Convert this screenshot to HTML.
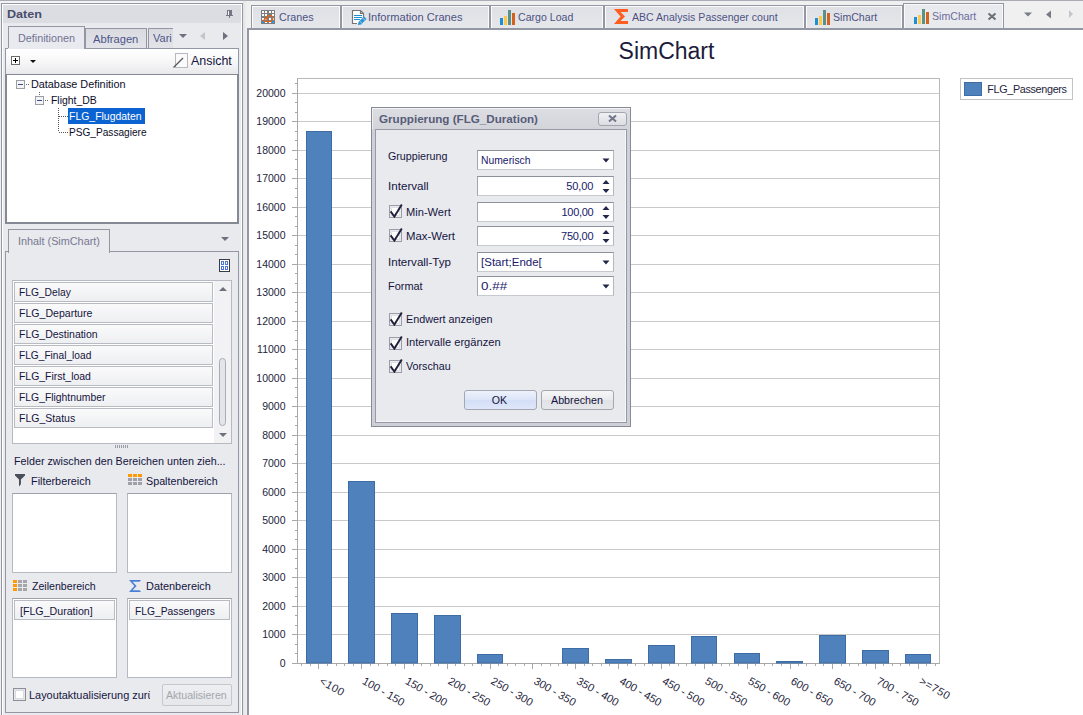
<!DOCTYPE html>
<html><head><meta charset="utf-8">
<style>
*{box-sizing:border-box}
html,body{margin:0;padding:0}
body{width:1083px;height:715px;overflow:hidden;position:relative;background:#eeeff2;font-family:"Liberation Sans", sans-serif;font-size:11px;color:#1e1e3c}
.a{position:absolute}
</style></head><body>
<svg style="position:absolute;left:0;top:0" width="1083" height="715"><rect x="248" y="29" width="835" height="686" fill="#ffffff"/><text x="666.5" y="58.7" font-family="Liberation Sans" font-size="23" fill="#1b1b3b" text-anchor="middle">SimChart</text><line x1="297.5" y1="634.5" x2="939.5" y2="634.5" stroke="#c9c9c9" stroke-width="1"/><line x1="297.5" y1="606.5" x2="939.5" y2="606.5" stroke="#c9c9c9" stroke-width="1"/><line x1="297.5" y1="577.5" x2="939.5" y2="577.5" stroke="#c9c9c9" stroke-width="1"/><line x1="297.5" y1="549.5" x2="939.5" y2="549.5" stroke="#c9c9c9" stroke-width="1"/><line x1="297.5" y1="520.5" x2="939.5" y2="520.5" stroke="#c9c9c9" stroke-width="1"/><line x1="297.5" y1="492.5" x2="939.5" y2="492.5" stroke="#c9c9c9" stroke-width="1"/><line x1="297.5" y1="463.5" x2="939.5" y2="463.5" stroke="#c9c9c9" stroke-width="1"/><line x1="297.5" y1="435.5" x2="939.5" y2="435.5" stroke="#c9c9c9" stroke-width="1"/><line x1="297.5" y1="406.5" x2="939.5" y2="406.5" stroke="#c9c9c9" stroke-width="1"/><line x1="297.5" y1="378.5" x2="939.5" y2="378.5" stroke="#c9c9c9" stroke-width="1"/><line x1="297.5" y1="349.5" x2="939.5" y2="349.5" stroke="#c9c9c9" stroke-width="1"/><line x1="297.5" y1="321.5" x2="939.5" y2="321.5" stroke="#c9c9c9" stroke-width="1"/><line x1="297.5" y1="292.5" x2="939.5" y2="292.5" stroke="#c9c9c9" stroke-width="1"/><line x1="297.5" y1="264.5" x2="939.5" y2="264.5" stroke="#c9c9c9" stroke-width="1"/><line x1="297.5" y1="235.5" x2="939.5" y2="235.5" stroke="#c9c9c9" stroke-width="1"/><line x1="297.5" y1="207.5" x2="939.5" y2="207.5" stroke="#c9c9c9" stroke-width="1"/><line x1="297.5" y1="178.5" x2="939.5" y2="178.5" stroke="#c9c9c9" stroke-width="1"/><line x1="297.5" y1="150.5" x2="939.5" y2="150.5" stroke="#c9c9c9" stroke-width="1"/><line x1="297.5" y1="121.5" x2="939.5" y2="121.5" stroke="#c9c9c9" stroke-width="1"/><line x1="297.5" y1="93.5" x2="939.5" y2="93.5" stroke="#c9c9c9" stroke-width="1"/><rect x="297.5" y="78.5" width="642.0" height="585.0" fill="none" stroke="#b9b9b9" stroke-width="1"/><line x1="292" y1="663.5" x2="297.5" y2="663.5" stroke="#a8a8a8"/><text x="285.5" y="667.0" font-family="Liberation Sans" font-size="10.5" fill="#1e1e3c" text-anchor="end">0</text><line x1="295" y1="653.5" x2="297.5" y2="653.5" stroke="#a8a8a8"/><line x1="295" y1="644.5" x2="297.5" y2="644.5" stroke="#a8a8a8"/><line x1="292" y1="634.5" x2="297.5" y2="634.5" stroke="#a8a8a8"/><text x="285.5" y="638.0" font-family="Liberation Sans" font-size="10.5" fill="#1e1e3c" text-anchor="end">1000</text><line x1="295" y1="625.5" x2="297.5" y2="625.5" stroke="#a8a8a8"/><line x1="295" y1="615.5" x2="297.5" y2="615.5" stroke="#a8a8a8"/><line x1="292" y1="606.5" x2="297.5" y2="606.5" stroke="#a8a8a8"/><text x="285.5" y="610.0" font-family="Liberation Sans" font-size="10.5" fill="#1e1e3c" text-anchor="end">2000</text><line x1="295" y1="596.5" x2="297.5" y2="596.5" stroke="#a8a8a8"/><line x1="295" y1="587.5" x2="297.5" y2="587.5" stroke="#a8a8a8"/><line x1="292" y1="577.5" x2="297.5" y2="577.5" stroke="#a8a8a8"/><text x="285.5" y="581.0" font-family="Liberation Sans" font-size="10.5" fill="#1e1e3c" text-anchor="end">3000</text><line x1="295" y1="568.5" x2="297.5" y2="568.5" stroke="#a8a8a8"/><line x1="295" y1="558.5" x2="297.5" y2="558.5" stroke="#a8a8a8"/><line x1="292" y1="549.5" x2="297.5" y2="549.5" stroke="#a8a8a8"/><text x="285.5" y="553.0" font-family="Liberation Sans" font-size="10.5" fill="#1e1e3c" text-anchor="end">4000</text><line x1="295" y1="539.5" x2="297.5" y2="539.5" stroke="#a8a8a8"/><line x1="295" y1="530.5" x2="297.5" y2="530.5" stroke="#a8a8a8"/><line x1="292" y1="520.5" x2="297.5" y2="520.5" stroke="#a8a8a8"/><text x="285.5" y="524.0" font-family="Liberation Sans" font-size="10.5" fill="#1e1e3c" text-anchor="end">5000</text><line x1="295" y1="511.5" x2="297.5" y2="511.5" stroke="#a8a8a8"/><line x1="295" y1="501.5" x2="297.5" y2="501.5" stroke="#a8a8a8"/><line x1="292" y1="492.5" x2="297.5" y2="492.5" stroke="#a8a8a8"/><text x="285.5" y="496.0" font-family="Liberation Sans" font-size="10.5" fill="#1e1e3c" text-anchor="end">6000</text><line x1="295" y1="482.5" x2="297.5" y2="482.5" stroke="#a8a8a8"/><line x1="295" y1="473.5" x2="297.5" y2="473.5" stroke="#a8a8a8"/><line x1="292" y1="463.5" x2="297.5" y2="463.5" stroke="#a8a8a8"/><text x="285.5" y="467.0" font-family="Liberation Sans" font-size="10.5" fill="#1e1e3c" text-anchor="end">7000</text><line x1="295" y1="454.5" x2="297.5" y2="454.5" stroke="#a8a8a8"/><line x1="295" y1="444.5" x2="297.5" y2="444.5" stroke="#a8a8a8"/><line x1="292" y1="435.5" x2="297.5" y2="435.5" stroke="#a8a8a8"/><text x="285.5" y="439.0" font-family="Liberation Sans" font-size="10.5" fill="#1e1e3c" text-anchor="end">8000</text><line x1="295" y1="425.5" x2="297.5" y2="425.5" stroke="#a8a8a8"/><line x1="295" y1="416.5" x2="297.5" y2="416.5" stroke="#a8a8a8"/><line x1="292" y1="406.5" x2="297.5" y2="406.5" stroke="#a8a8a8"/><text x="285.5" y="410.0" font-family="Liberation Sans" font-size="10.5" fill="#1e1e3c" text-anchor="end">9000</text><line x1="295" y1="397.5" x2="297.5" y2="397.5" stroke="#a8a8a8"/><line x1="295" y1="387.5" x2="297.5" y2="387.5" stroke="#a8a8a8"/><line x1="292" y1="378.5" x2="297.5" y2="378.5" stroke="#a8a8a8"/><text x="285.5" y="382.0" font-family="Liberation Sans" font-size="10.5" fill="#1e1e3c" text-anchor="end">10000</text><line x1="295" y1="368.5" x2="297.5" y2="368.5" stroke="#a8a8a8"/><line x1="295" y1="359.5" x2="297.5" y2="359.5" stroke="#a8a8a8"/><line x1="292" y1="349.5" x2="297.5" y2="349.5" stroke="#a8a8a8"/><text x="285.5" y="353.0" font-family="Liberation Sans" font-size="10.5" fill="#1e1e3c" text-anchor="end">11000</text><line x1="295" y1="340.5" x2="297.5" y2="340.5" stroke="#a8a8a8"/><line x1="295" y1="330.5" x2="297.5" y2="330.5" stroke="#a8a8a8"/><line x1="292" y1="321.5" x2="297.5" y2="321.5" stroke="#a8a8a8"/><text x="285.5" y="325.0" font-family="Liberation Sans" font-size="10.5" fill="#1e1e3c" text-anchor="end">12000</text><line x1="295" y1="311.5" x2="297.5" y2="311.5" stroke="#a8a8a8"/><line x1="295" y1="302.5" x2="297.5" y2="302.5" stroke="#a8a8a8"/><line x1="292" y1="292.5" x2="297.5" y2="292.5" stroke="#a8a8a8"/><text x="285.5" y="296.0" font-family="Liberation Sans" font-size="10.5" fill="#1e1e3c" text-anchor="end">13000</text><line x1="295" y1="283.5" x2="297.5" y2="283.5" stroke="#a8a8a8"/><line x1="295" y1="273.5" x2="297.5" y2="273.5" stroke="#a8a8a8"/><line x1="292" y1="264.5" x2="297.5" y2="264.5" stroke="#a8a8a8"/><text x="285.5" y="268.0" font-family="Liberation Sans" font-size="10.5" fill="#1e1e3c" text-anchor="end">14000</text><line x1="295" y1="254.5" x2="297.5" y2="254.5" stroke="#a8a8a8"/><line x1="295" y1="245.5" x2="297.5" y2="245.5" stroke="#a8a8a8"/><line x1="292" y1="235.5" x2="297.5" y2="235.5" stroke="#a8a8a8"/><text x="285.5" y="239.0" font-family="Liberation Sans" font-size="10.5" fill="#1e1e3c" text-anchor="end">15000</text><line x1="295" y1="226.5" x2="297.5" y2="226.5" stroke="#a8a8a8"/><line x1="295" y1="216.5" x2="297.5" y2="216.5" stroke="#a8a8a8"/><line x1="292" y1="207.5" x2="297.5" y2="207.5" stroke="#a8a8a8"/><text x="285.5" y="211.0" font-family="Liberation Sans" font-size="10.5" fill="#1e1e3c" text-anchor="end">16000</text><line x1="295" y1="197.5" x2="297.5" y2="197.5" stroke="#a8a8a8"/><line x1="295" y1="188.5" x2="297.5" y2="188.5" stroke="#a8a8a8"/><line x1="292" y1="178.5" x2="297.5" y2="178.5" stroke="#a8a8a8"/><text x="285.5" y="182.0" font-family="Liberation Sans" font-size="10.5" fill="#1e1e3c" text-anchor="end">17000</text><line x1="295" y1="169.5" x2="297.5" y2="169.5" stroke="#a8a8a8"/><line x1="295" y1="159.5" x2="297.5" y2="159.5" stroke="#a8a8a8"/><line x1="292" y1="150.5" x2="297.5" y2="150.5" stroke="#a8a8a8"/><text x="285.5" y="154.0" font-family="Liberation Sans" font-size="10.5" fill="#1e1e3c" text-anchor="end">18000</text><line x1="295" y1="140.5" x2="297.5" y2="140.5" stroke="#a8a8a8"/><line x1="295" y1="131.5" x2="297.5" y2="131.5" stroke="#a8a8a8"/><line x1="292" y1="121.5" x2="297.5" y2="121.5" stroke="#a8a8a8"/><text x="285.5" y="125.0" font-family="Liberation Sans" font-size="10.5" fill="#1e1e3c" text-anchor="end">19000</text><line x1="295" y1="112.5" x2="297.5" y2="112.5" stroke="#a8a8a8"/><line x1="295" y1="102.5" x2="297.5" y2="102.5" stroke="#a8a8a8"/><line x1="292" y1="93.5" x2="297.5" y2="93.5" stroke="#a8a8a8"/><text x="285.5" y="97.0" font-family="Liberation Sans" font-size="10.5" fill="#1e1e3c" text-anchor="end">20000</text><line x1="295" y1="83.5" x2="297.5" y2="83.5" stroke="#a8a8a8"/><line x1="297.5" y1="78.5" x2="297.5" y2="663.5" stroke="#a8a8a8"/><line x1="297.5" y1="663.5" x2="939.5" y2="663.5" stroke="#a8a8a8"/><line x1="318.5" y1="663.0" x2="318.5" y2="669.0" stroke="#a8a8a8"/><line x1="301.5" y1="663.0" x2="301.5" y2="666.0" stroke="#a8a8a8"/><line x1="310.5" y1="663.0" x2="310.5" y2="666.0" stroke="#a8a8a8"/><line x1="327.5" y1="663.0" x2="327.5" y2="666.0" stroke="#a8a8a8"/><line x1="336.5" y1="663.0" x2="336.5" y2="666.0" stroke="#a8a8a8"/><rect x="306.5" y="131.5" width="25" height="531.5" fill="#4f81bd" stroke="#3e6da6" stroke-width="1"/><text transform="translate(318.7,683.2) rotate(30)" font-family="Liberation Sans" font-size="11" fill="#1e1e3c" letter-spacing="0.5">&lt;100</text><line x1="361.5" y1="663.0" x2="361.5" y2="669.0" stroke="#a8a8a8"/><line x1="344.5" y1="663.0" x2="344.5" y2="666.0" stroke="#a8a8a8"/><line x1="353.5" y1="663.0" x2="353.5" y2="666.0" stroke="#a8a8a8"/><line x1="370.5" y1="663.0" x2="370.5" y2="666.0" stroke="#a8a8a8"/><line x1="378.5" y1="663.0" x2="378.5" y2="666.0" stroke="#a8a8a8"/><rect x="348.5" y="481.5" width="26" height="181.5" fill="#4f81bd" stroke="#3e6da6" stroke-width="1"/><text transform="translate(361.55,683.2) rotate(30)" font-family="Liberation Sans" font-size="11" fill="#1e1e3c">100 - 150</text><line x1="404.5" y1="663.0" x2="404.5" y2="669.0" stroke="#a8a8a8"/><line x1="387.5" y1="663.0" x2="387.5" y2="666.0" stroke="#a8a8a8"/><line x1="395.5" y1="663.0" x2="395.5" y2="666.0" stroke="#a8a8a8"/><line x1="413.5" y1="663.0" x2="413.5" y2="666.0" stroke="#a8a8a8"/><line x1="421.5" y1="663.0" x2="421.5" y2="666.0" stroke="#a8a8a8"/><rect x="391.5" y="613.5" width="26" height="49.5" fill="#4f81bd" stroke="#3e6da6" stroke-width="1"/><text transform="translate(404.4,683.2) rotate(30)" font-family="Liberation Sans" font-size="11" fill="#1e1e3c">150 - 200</text><line x1="447.5" y1="663.0" x2="447.5" y2="669.0" stroke="#a8a8a8"/><line x1="430.5" y1="663.0" x2="430.5" y2="666.0" stroke="#a8a8a8"/><line x1="438.5" y1="663.0" x2="438.5" y2="666.0" stroke="#a8a8a8"/><line x1="455.5" y1="663.0" x2="455.5" y2="666.0" stroke="#a8a8a8"/><line x1="464.5" y1="663.0" x2="464.5" y2="666.0" stroke="#a8a8a8"/><rect x="434.5" y="615.5" width="26" height="47.5" fill="#4f81bd" stroke="#3e6da6" stroke-width="1"/><text transform="translate(447.25,683.2) rotate(30)" font-family="Liberation Sans" font-size="11" fill="#1e1e3c">200 - 250</text><line x1="490.5" y1="663.0" x2="490.5" y2="669.0" stroke="#a8a8a8"/><line x1="472.5" y1="663.0" x2="472.5" y2="666.0" stroke="#a8a8a8"/><line x1="481.5" y1="663.0" x2="481.5" y2="666.0" stroke="#a8a8a8"/><line x1="498.5" y1="663.0" x2="498.5" y2="666.0" stroke="#a8a8a8"/><line x1="507.5" y1="663.0" x2="507.5" y2="666.0" stroke="#a8a8a8"/><rect x="477.5" y="654.5" width="25" height="8.5" fill="#4f81bd" stroke="#3e6da6" stroke-width="1"/><text transform="translate(490.1,683.2) rotate(30)" font-family="Liberation Sans" font-size="11" fill="#1e1e3c">250 - 300</text><line x1="532.5" y1="663.0" x2="532.5" y2="669.0" stroke="#a8a8a8"/><line x1="515.5" y1="663.0" x2="515.5" y2="666.0" stroke="#a8a8a8"/><line x1="524.5" y1="663.0" x2="524.5" y2="666.0" stroke="#a8a8a8"/><line x1="541.5" y1="663.0" x2="541.5" y2="666.0" stroke="#a8a8a8"/><line x1="550.5" y1="663.0" x2="550.5" y2="666.0" stroke="#a8a8a8"/><text transform="translate(532.95,683.2) rotate(30)" font-family="Liberation Sans" font-size="11" fill="#1e1e3c">300 - 350</text><line x1="575.5" y1="663.0" x2="575.5" y2="669.0" stroke="#a8a8a8"/><line x1="558.5" y1="663.0" x2="558.5" y2="666.0" stroke="#a8a8a8"/><line x1="567.5" y1="663.0" x2="567.5" y2="666.0" stroke="#a8a8a8"/><line x1="584.5" y1="663.0" x2="584.5" y2="666.0" stroke="#a8a8a8"/><line x1="592.5" y1="663.0" x2="592.5" y2="666.0" stroke="#a8a8a8"/><rect x="562.5" y="648.5" width="26" height="14.5" fill="#4f81bd" stroke="#3e6da6" stroke-width="1"/><text transform="translate(575.8,683.2) rotate(30)" font-family="Liberation Sans" font-size="11" fill="#1e1e3c">350 - 400</text><line x1="618.5" y1="663.0" x2="618.5" y2="669.0" stroke="#a8a8a8"/><line x1="601.5" y1="663.0" x2="601.5" y2="666.0" stroke="#a8a8a8"/><line x1="609.5" y1="663.0" x2="609.5" y2="666.0" stroke="#a8a8a8"/><line x1="627.5" y1="663.0" x2="627.5" y2="666.0" stroke="#a8a8a8"/><line x1="635.5" y1="663.0" x2="635.5" y2="666.0" stroke="#a8a8a8"/><rect x="605.5" y="659.5" width="26" height="3.5" fill="#4f81bd" stroke="#3e6da6" stroke-width="1"/><text transform="translate(618.65,683.2) rotate(30)" font-family="Liberation Sans" font-size="11" fill="#1e1e3c">400 - 450</text><line x1="661.5" y1="663.0" x2="661.5" y2="669.0" stroke="#a8a8a8"/><line x1="644.5" y1="663.0" x2="644.5" y2="666.0" stroke="#a8a8a8"/><line x1="652.5" y1="663.0" x2="652.5" y2="666.0" stroke="#a8a8a8"/><line x1="669.5" y1="663.0" x2="669.5" y2="666.0" stroke="#a8a8a8"/><line x1="678.5" y1="663.0" x2="678.5" y2="666.0" stroke="#a8a8a8"/><rect x="648.5" y="645.5" width="26" height="17.5" fill="#4f81bd" stroke="#3e6da6" stroke-width="1"/><text transform="translate(661.5,683.2) rotate(30)" font-family="Liberation Sans" font-size="11" fill="#1e1e3c">450 - 500</text><line x1="704.5" y1="663.0" x2="704.5" y2="669.0" stroke="#a8a8a8"/><line x1="686.5" y1="663.0" x2="686.5" y2="666.0" stroke="#a8a8a8"/><line x1="695.5" y1="663.0" x2="695.5" y2="666.0" stroke="#a8a8a8"/><line x1="712.5" y1="663.0" x2="712.5" y2="666.0" stroke="#a8a8a8"/><line x1="721.5" y1="663.0" x2="721.5" y2="666.0" stroke="#a8a8a8"/><rect x="691.5" y="636.5" width="25" height="26.5" fill="#4f81bd" stroke="#3e6da6" stroke-width="1"/><text transform="translate(704.35,683.2) rotate(30)" font-family="Liberation Sans" font-size="11" fill="#1e1e3c">500 - 550</text><line x1="747.5" y1="663.0" x2="747.5" y2="669.0" stroke="#a8a8a8"/><line x1="729.5" y1="663.0" x2="729.5" y2="666.0" stroke="#a8a8a8"/><line x1="738.5" y1="663.0" x2="738.5" y2="666.0" stroke="#a8a8a8"/><line x1="755.5" y1="663.0" x2="755.5" y2="666.0" stroke="#a8a8a8"/><line x1="764.5" y1="663.0" x2="764.5" y2="666.0" stroke="#a8a8a8"/><rect x="734.5" y="653.5" width="25" height="9.5" fill="#4f81bd" stroke="#3e6da6" stroke-width="1"/><text transform="translate(747.2,683.2) rotate(30)" font-family="Liberation Sans" font-size="11" fill="#1e1e3c">550 - 600</text><line x1="790.5" y1="663.0" x2="790.5" y2="669.0" stroke="#a8a8a8"/><line x1="772.5" y1="663.0" x2="772.5" y2="666.0" stroke="#a8a8a8"/><line x1="781.5" y1="663.0" x2="781.5" y2="666.0" stroke="#a8a8a8"/><line x1="798.5" y1="663.0" x2="798.5" y2="666.0" stroke="#a8a8a8"/><line x1="806.5" y1="663.0" x2="806.5" y2="666.0" stroke="#a8a8a8"/><rect x="776.5" y="661.5" width="26" height="1.5" fill="#4f81bd" stroke="#3e6da6" stroke-width="1"/><text transform="translate(790.05,683.2) rotate(30)" font-family="Liberation Sans" font-size="11" fill="#1e1e3c">600 - 650</text><line x1="832.5" y1="663.0" x2="832.5" y2="669.0" stroke="#a8a8a8"/><line x1="815.5" y1="663.0" x2="815.5" y2="666.0" stroke="#a8a8a8"/><line x1="823.5" y1="663.0" x2="823.5" y2="666.0" stroke="#a8a8a8"/><line x1="841.5" y1="663.0" x2="841.5" y2="666.0" stroke="#a8a8a8"/><line x1="849.5" y1="663.0" x2="849.5" y2="666.0" stroke="#a8a8a8"/><rect x="819.5" y="635.5" width="26" height="27.5" fill="#4f81bd" stroke="#3e6da6" stroke-width="1"/><text transform="translate(832.9000000000001,683.2) rotate(30)" font-family="Liberation Sans" font-size="11" fill="#1e1e3c">650 - 700</text><line x1="875.5" y1="663.0" x2="875.5" y2="669.0" stroke="#a8a8a8"/><line x1="858.5" y1="663.0" x2="858.5" y2="666.0" stroke="#a8a8a8"/><line x1="866.5" y1="663.0" x2="866.5" y2="666.0" stroke="#a8a8a8"/><line x1="883.5" y1="663.0" x2="883.5" y2="666.0" stroke="#a8a8a8"/><line x1="892.5" y1="663.0" x2="892.5" y2="666.0" stroke="#a8a8a8"/><rect x="862.5" y="650.5" width="26" height="12.5" fill="#4f81bd" stroke="#3e6da6" stroke-width="1"/><text transform="translate(875.75,683.2) rotate(30)" font-family="Liberation Sans" font-size="11" fill="#1e1e3c">700 - 750</text><line x1="918.5" y1="663.0" x2="918.5" y2="669.0" stroke="#a8a8a8"/><line x1="900.5" y1="663.0" x2="900.5" y2="666.0" stroke="#a8a8a8"/><line x1="909.5" y1="663.0" x2="909.5" y2="666.0" stroke="#a8a8a8"/><line x1="926.5" y1="663.0" x2="926.5" y2="666.0" stroke="#a8a8a8"/><line x1="935.5" y1="663.0" x2="935.5" y2="666.0" stroke="#a8a8a8"/><rect x="905.5" y="654.5" width="25" height="8.5" fill="#4f81bd" stroke="#3e6da6" stroke-width="1"/><text transform="translate(918.5999999999999,683.2) rotate(30)" font-family="Liberation Sans" font-size="11" fill="#1e1e3c" letter-spacing="0.5">&gt;=750</text><rect x="960.5" y="78.5" width="112" height="21" fill="#fff" stroke="#c3c3c3"/><rect x="964.5" y="82.5" width="17" height="13" fill="#4f81bd" stroke="#3e6da6"/><text x="987.2" y="93.3" font-family="Liberation Sans" font-size="10.8" fill="#1e1e3c" textLength="79.8" lengthAdjust="spacing">FLG_Passengers</text></svg>
<div style="position:absolute;left:0px;top:0px;width:1083px;height:1px;background:#a9acb5"></div>
<div style="position:absolute;left:0px;top:1px;width:1083px;height:2px;background:#f3f3f5"></div>
<div style="position:absolute;left:1px;top:3px;width:242px;height:728px;border:1px solid #9397a3;background:#e9eaee"></div>
<div style="position:absolute;left:2px;top:4px;width:240px;height:727px;border:1px solid #ffffff;border-bottom:none"></div>
<div style="position:absolute;left:3px;top:5px;width:238px;height:18px;background:#dcdde2"></div>
<div style="position:absolute;left:7px;top:8px;font-size:11.5px;line-height:13px;color:#474e6c;font-weight:bold;white-space:nowrap;transform:scaleX(1.0954);transform-origin:0 0;">Daten</div>
<svg class="a" style="left:225px;top:9px" width="10" height="10"><rect x="2" y="1" width="5" height="5" fill="#737785"/><rect x="3" y="2" width="1" height="4" fill="#f4f4f6"/><rect x="1" y="6" width="7" height="1" fill="#737785"/><rect x="4" y="7" width="1" height="2" fill="#737785"/></svg><div style="position:absolute;left:85px;top:28px;width:62px;height:21px;border:1px solid #9397a3;border-bottom:none;background:linear-gradient(#dadbe1,#e3e4e9)"></div>
<div style="position:absolute;left:148px;top:28px;width:25px;height:21px;border:1px solid #9397a3;border-right:none;border-bottom:none;background:linear-gradient(#dadbe1,#e3e4e9)"></div>
<div style="position:absolute;left:8px;top:26px;width:77px;height:24px;border:1px solid #9397a3;border-bottom:none;background:#e9eaef"></div>
<div style="position:absolute;left:18px;top:32px;font-size:11px;line-height:13px;color:#707292;font-weight:normal;white-space:nowrap;transform:scaleX(0.9812);transform-origin:0 0;">Definitionen</div>
<div style="position:absolute;left:93px;top:33px;font-size:11px;line-height:13px;color:#4e5588;font-weight:normal;white-space:nowrap;transform:scaleX(1.0144);transform-origin:0 0;">Abfragen</div>
<div class="a" style="left:150px;top:33px;width:22px;height:12px;overflow:hidden"><div style="position:absolute;left:3px;top:-1px;font-size:11px;line-height:13px;color:#4e5588;font-weight:normal;white-space:nowrap;">Variablen</div>
</div><svg class="a" style="left:178px;top:32px" width="52" height="10"><path d="M1 2h8l-4 4z" fill="#6d717e"/><path d="M27 0v8l-5-4z" fill="#c3c5cc"/><path d="M45 0v8l5-4z" fill="#6d717e"/></svg><div style="position:absolute;left:5px;top:48px;width:234px;height:26px;border:1px solid #9397a3;border-bottom:none;background:linear-gradient(#ffffff,#f7f7f8 50%,#e9e9ec)"></div>
<div style="position:absolute;left:8px;top:48px;width:76px;height:1px;background:#e9eaef"></div>
<svg class="a" style="left:11px;top:56px" width="30" height="10"><rect x="0.5" y="0.5" width="8" height="8" fill="#fff" stroke="#6b6b6b"/><path d="M2 4.5h5M4.5 2v5" stroke="#000"/><path d="M19 4h6l-3 3z" fill="#111"/></svg><svg class="a" style="left:172px;top:52px" width="17" height="17"><rect x="3.5" y="1.5" width="12" height="14" fill="#fafafa" stroke="#b8b9be"/><path d="M1.5 15.5L11 6" stroke="#555" stroke-width="1.3"/></svg><div style="position:absolute;left:191px;top:54px;font-size:12.3px;line-height:14px;color:#141440;font-weight:normal;white-space:nowrap;transform:scaleX(1.0117);transform-origin:0 0;">Ansicht</div>
<div style="position:absolute;left:5px;top:74px;width:234px;height:150px;border:2px solid #858995;border-top:1px solid #858995;background:#fff"></div>
<svg class="a" style="left:15px;top:79px" width="70" height="60"><rect x="1.5" y="1.5" width="8" height="8" fill="#f4f4f6" stroke="#9a9ca6"/><path d="M3 5.5h5" stroke="#3a4a8a"/><path d="M11 5.5h1M13 5.5h1" stroke="#666"/><path d="M24.5 13v1M24.5 15v1" stroke="#666"/><rect x="20.5" y="17.5" width="8" height="8" fill="#f4f4f6" stroke="#9a9ca6"/><path d="M22 21.5h5" stroke="#3a4a8a"/><path d="M30 21.5h1M32 21.5h1" stroke="#666"/><path d="M43.5 29v24" stroke="#555" stroke-dasharray="1 1"/><path d="M44 37.5h9M44 53.5h9" stroke="#555" stroke-dasharray="1 1"/></svg><div style="position:absolute;left:31px;top:78px;font-size:11px;line-height:13px;color:#0c0c28;font-weight:normal;white-space:nowrap;transform:scaleX(0.9842);transform-origin:0 0;">Database Definition</div>
<div style="position:absolute;left:50.5px;top:94px;font-size:11px;line-height:13px;color:#0c0c28;font-weight:normal;white-space:nowrap;transform:scaleX(0.9483);transform-origin:0 0;">Flight_DB</div>
<div style="position:absolute;left:68px;top:108px;width:77px;height:16px;background:#0b63d1"></div>
<div style="position:absolute;left:69.4px;top:110px;font-size:11px;line-height:13px;color:#ffffff;font-weight:normal;white-space:nowrap;transform:scaleX(0.9498);transform-origin:0 0;">FLG_Flugdaten</div>
<div style="position:absolute;left:69.4px;top:126px;font-size:11px;line-height:13px;color:#0c0c28;font-weight:normal;white-space:nowrap;transform:scaleX(0.9195);transform-origin:0 0;">PSG_Passagiere</div>
<div style="position:absolute;left:5px;top:251px;width:234px;height:462px;border:1px solid #9397a3;background:#e9eaee"></div>
<div style="position:absolute;left:8px;top:229px;width:102px;height:24px;border:1px solid #9397a3;border-bottom:none;background:#e9eaee"></div>
<div style="position:absolute;left:18px;top:235px;font-size:11px;line-height:13px;color:#767890;font-weight:normal;white-space:nowrap;transform:scaleX(0.9851);transform-origin:0 0;">Inhalt (SimChart)</div>
<svg class="a" style="left:220px;top:236px" width="10" height="7"><path d="M1 1h8l-4 4z" fill="#6d717e"/></svg><svg class="a" style="left:219px;top:259px" width="11" height="13"><rect x="0.5" y="0.5" width="10" height="12" fill="#fff" stroke="#3a3a44"/><rect x="2.5" y="2.5" width="2" height="3" fill="none" stroke="#4a7ad6"/><rect x="6.5" y="2.5" width="2" height="3" fill="none" stroke="#4a7ad6"/><rect x="2.5" y="7.5" width="2" height="3" fill="none" stroke="#4a7ad6"/><rect x="6.5" y="7.5" width="2" height="3" fill="none" stroke="#4a7ad6"/></svg><div style="position:absolute;left:12px;top:280px;width:220px;height:164px;border:1px solid #b6b9c2;background:#fff"></div>
<div style="position:absolute;left:214px;top:281px;width:17px;height:162px;background:#f2f2f4"></div>
<div style="position:absolute;left:14px;top:282px;width:199px;height:20px;border:1px solid #b9bbc3;background:linear-gradient(#fafafb,#eeeff1)"></div>
<div style="position:absolute;left:19.4px;top:286px;font-size:11px;line-height:13px;color:#141440;font-weight:normal;white-space:nowrap;transform:scaleX(0.9310);transform-origin:0 0;">FLG_Delay</div>
<div style="position:absolute;left:14px;top:303px;width:199px;height:20px;border:1px solid #b9bbc3;background:linear-gradient(#fafafb,#eeeff1)"></div>
<div style="position:absolute;left:19.4px;top:307px;font-size:11px;line-height:13px;color:#141440;font-weight:normal;white-space:nowrap;transform:scaleX(0.9603);transform-origin:0 0;">FLG_Departure</div>
<div style="position:absolute;left:14px;top:324px;width:199px;height:20px;border:1px solid #b9bbc3;background:linear-gradient(#fafafb,#eeeff1)"></div>
<div style="position:absolute;left:19.4px;top:328px;font-size:11px;line-height:13px;color:#141440;font-weight:normal;white-space:nowrap;transform:scaleX(0.9522);transform-origin:0 0;">FLG_Destination</div>
<div style="position:absolute;left:14px;top:345px;width:199px;height:20px;border:1px solid #b9bbc3;background:linear-gradient(#fafafb,#eeeff1)"></div>
<div style="position:absolute;left:19.4px;top:349px;font-size:11px;line-height:13px;color:#141440;font-weight:normal;white-space:nowrap;transform:scaleX(0.9236);transform-origin:0 0;">FLG_Final_load</div>
<div style="position:absolute;left:14px;top:366px;width:199px;height:20px;border:1px solid #b9bbc3;background:linear-gradient(#fafafb,#eeeff1)"></div>
<div style="position:absolute;left:19.4px;top:370px;font-size:11px;line-height:13px;color:#141440;font-weight:normal;white-space:nowrap;transform:scaleX(0.9484);transform-origin:0 0;">FLG_First_load</div>
<div style="position:absolute;left:14px;top:387px;width:199px;height:20px;border:1px solid #b9bbc3;background:linear-gradient(#fafafb,#eeeff1)"></div>
<div style="position:absolute;left:19.4px;top:391px;font-size:11px;line-height:13px;color:#141440;font-weight:normal;white-space:nowrap;transform:scaleX(0.9420);transform-origin:0 0;">FLG_Flightnumber</div>
<div style="position:absolute;left:14px;top:408px;width:199px;height:20px;border:1px solid #b9bbc3;background:linear-gradient(#fafafb,#eeeff1)"></div>
<div style="position:absolute;left:19.4px;top:412px;font-size:11px;line-height:13px;color:#141440;font-weight:normal;white-space:nowrap;transform:scaleX(0.9574);transform-origin:0 0;">FLG_Status</div>
<svg class="a" style="left:216px;top:284px" width="14" height="158"><path d="M3 7h8l-4-4z" fill="#6d717e"/><rect x="3.5" y="74.5" width="6" height="67" rx="3" fill="#e4e5ea" stroke="#a9acb6"/><path d="M3 149h8l-4 4z" fill="#6d717e"/></svg><svg class="a" style="left:114px;top:445px" width="16" height="3"><path d="M1.5 0v3M3.5 0v3M5.5 0v3M7.5 0v3M9.5 0v3M11.5 0v3M13.5 0v3" stroke="#9a9ca6"/></svg><div style="position:absolute;left:14.4px;top:455px;font-size:11px;line-height:13px;color:#141440;font-weight:normal;white-space:nowrap;transform:scaleX(0.9775);transform-origin:0 0;">Felder zwischen den Bereichen unten zieh...</div>
<svg class="a" style="left:14px;top:473px" width="12" height="14"><path d="M1 1H11V2.6L6.9 6.6V11.2L5 13.6V6.6L1 2.6Z" fill="#4a4d5a"/></svg><div style="position:absolute;left:31.3px;top:475px;font-size:11px;line-height:13px;color:#141440;font-weight:normal;white-space:nowrap;transform:scaleX(0.9863);transform-origin:0 0;">Filterbereich</div>
<svg class="a" style="left:128px;top:474px" width="14" height="11"><rect x="0" y="0" width="4" height="3" fill="#ff9a05"/><rect x="5" y="0" width="4" height="3" fill="#ff9a05"/><rect x="10" y="0" width="4" height="3" fill="#ff9a05"/><rect x="0" y="4" width="4" height="3" fill="#9fa0aa"/><rect x="5" y="4" width="4" height="3" fill="#9fa0aa"/><rect x="10" y="4" width="4" height="3" fill="#9fa0aa"/><rect x="0" y="8" width="4" height="3" fill="#9fa0aa"/><rect x="5" y="8" width="4" height="3" fill="#9fa0aa"/><rect x="10" y="8" width="4" height="3" fill="#9fa0aa"/></svg><div style="position:absolute;left:146.3px;top:475px;font-size:11px;line-height:13px;color:#141440;font-weight:normal;white-space:nowrap;transform:scaleX(0.9770);transform-origin:0 0;">Spaltenbereich</div>
<div style="position:absolute;left:12px;top:493px;width:105px;height:80px;border:1px solid #b6b9c2;border-top-color:#9ea1ab;background:#fff"></div>
<div style="position:absolute;left:127px;top:493px;width:105px;height:80px;border:1px solid #b6b9c2;border-top-color:#9ea1ab;background:#fff"></div>
<svg class="a" style="left:13px;top:580px" width="14" height="11"><rect x="0" y="0" width="4" height="3" fill="#ff9a05"/><rect x="5" y="0" width="4" height="3" fill="#a6a6a8"/><rect x="10" y="0" width="4" height="3" fill="#a6a6a8"/><rect x="0" y="4" width="4" height="3" fill="#ff9a05"/><rect x="5" y="4" width="4" height="3" fill="#a6a6a8"/><rect x="10" y="4" width="4" height="3" fill="#a6a6a8"/><rect x="0" y="8" width="4" height="3" fill="#ff9a05"/><rect x="5" y="8" width="4" height="3" fill="#a6a6a8"/><rect x="10" y="8" width="4" height="3" fill="#a6a6a8"/></svg><div style="position:absolute;left:31.6px;top:580px;font-size:11px;line-height:13px;color:#141440;font-weight:normal;white-space:nowrap;transform:scaleX(0.9630);transform-origin:0 0;">Zeilenbereich</div>
<svg class="a" style="left:129px;top:580px" width="12" height="12"><path d="M0 0H12L10.6 1.8H3.6L7.6 6L3.6 10.2H10.6L12 12H0L5.4 6Z" fill="#4a7fd6"/></svg><div style="position:absolute;left:146.3px;top:580px;font-size:11px;line-height:13px;color:#141440;font-weight:normal;white-space:nowrap;transform:scaleX(0.9918);transform-origin:0 0;">Datenbereich</div>
<div style="position:absolute;left:12px;top:598px;width:105px;height:80px;border:1px solid #b6b9c2;border-top-color:#9ea1ab;background:#fff"></div>
<div style="position:absolute;left:127px;top:598px;width:105px;height:80px;border:1px solid #b6b9c2;border-top-color:#9ea1ab;background:#fff"></div>
<div style="position:absolute;left:14px;top:600px;width:101px;height:20px;border:1px solid #b9bbc3;background:linear-gradient(#fafafb,#eeeff1)"></div>
<div style="position:absolute;left:20px;top:605px;font-size:11px;line-height:13px;color:#141440;font-weight:normal;white-space:nowrap;transform:scaleX(0.9667);transform-origin:0 0;">[FLG_Duration]</div>
<div style="position:absolute;left:129px;top:600px;width:101px;height:20px;border:1px solid #b9bbc3;background:linear-gradient(#fafafb,#eeeff1)"></div>
<div style="position:absolute;left:134.5px;top:605px;font-size:11px;line-height:13px;color:#141440;font-weight:normal;white-space:nowrap;transform:scaleX(0.9345);transform-origin:0 0;">FLG_Passengers</div>
<div style="position:absolute;left:13px;top:688px;width:13px;height:13px;border:1px solid #8c8f9a;background:#fff;box-shadow:inset 0 0 0 1px #e6e7eb,inset 0 0 0 2px #d9dbe1"></div>
<div class="a" style="left:29px;top:686px;width:121px;height:16px;overflow:hidden"><div style="position:absolute;left:0.4px;top:3px;font-size:11px;line-height:13px;color:#141440;font-weight:normal;white-space:nowrap;transform:scaleX(0.9931);transform-origin:0 0;">Layoutaktualisierung zurückstellen</div>
</div><div style="position:absolute;left:162px;top:684px;width:70px;height:22px;border:1px solid #c5c7ce;border-radius:2px;background:linear-gradient(#eeeff2,#e6e7eb)"></div>
<div style="position:absolute;left:166.3px;top:689px;font-size:11px;line-height:13px;color:#a3a5ad;font-weight:normal;white-space:nowrap;transform:scaleX(0.9637);transform-origin:0 0;">Aktualisieren</div>
<div style="position:absolute;left:243px;top:1px;width:840px;height:27px;background:#f0f0f1"></div>
<div style="position:absolute;left:243px;top:1px;width:4px;height:714px;background:linear-gradient(90deg,#e2e3e6,#f1f1f1)"></div>
<div style="position:absolute;left:247px;top:28px;width:836px;height:2px;background:#9397a3"></div>
<div style="position:absolute;left:247px;top:28px;width:2px;height:687px;background:#9397a3"></div>
<div style="position:absolute;left:251px;top:5px;width:90px;height:23px;border:1px solid #9397a3;border-bottom:none;background:linear-gradient(#dfe0e5,#e6e7eb);box-shadow:inset 1px 1px 0 #fbfbfc,inset -1px 0 0 #fbfbfc"></div>
<div style="position:absolute;left:278.6px;top:11px;font-size:11px;line-height:13px;color:#4c5283;font-weight:normal;white-space:nowrap;transform:scaleX(0.9783);transform-origin:0 0;">Cranes</div>
<div style="position:absolute;left:341px;top:5px;width:149px;height:23px;border:1px solid #9397a3;border-bottom:none;background:linear-gradient(#dfe0e5,#e6e7eb);box-shadow:inset 1px 1px 0 #fbfbfc,inset -1px 0 0 #fbfbfc"></div>
<div style="position:absolute;left:367.8px;top:11px;font-size:11px;line-height:13px;color:#4c5283;font-weight:normal;white-space:nowrap;transform:scaleX(1.0102);transform-origin:0 0;">Information Cranes</div>
<div style="position:absolute;left:490px;top:5px;width:114px;height:23px;border:1px solid #9397a3;border-bottom:none;background:linear-gradient(#dfe0e5,#e6e7eb);box-shadow:inset 1px 1px 0 #fbfbfc,inset -1px 0 0 #fbfbfc"></div>
<div style="position:absolute;left:517.6px;top:11px;font-size:11px;line-height:13px;color:#4c5283;font-weight:normal;white-space:nowrap;transform:scaleX(0.9617);transform-origin:0 0;">Cargo Load</div>
<div style="position:absolute;left:604px;top:5px;width:201px;height:23px;border:1px solid #9397a3;border-bottom:none;background:linear-gradient(#dfe0e5,#e6e7eb);box-shadow:inset 1px 1px 0 #fbfbfc,inset -1px 0 0 #fbfbfc"></div>
<div style="position:absolute;left:632.1px;top:11px;font-size:11px;line-height:13px;color:#4c5283;font-weight:normal;white-space:nowrap;transform:scaleX(0.9602);transform-origin:0 0;">ABC Analysis Passenger count</div>
<div style="position:absolute;left:805px;top:5px;width:98px;height:23px;border:1px solid #9397a3;border-bottom:none;background:linear-gradient(#dfe0e5,#e6e7eb);box-shadow:inset 1px 1px 0 #fbfbfc,inset -1px 0 0 #fbfbfc"></div>
<div style="position:absolute;left:832.7px;top:11px;font-size:11px;line-height:13px;color:#4c5283;font-weight:normal;white-space:nowrap;transform:scaleX(0.9620);transform-origin:0 0;">SimChart</div>
<div style="position:absolute;left:903px;top:3px;width:101px;height:25px;border:1px solid #9397a3;border-bottom:none;background:#e9eaee;box-shadow:inset 1px 1px 0 #fafafb,inset -1px 0 0 #fafafb"></div>
<div style="position:absolute;left:931.5px;top:10px;font-size:11px;line-height:13px;color:#6c6c9c;font-weight:normal;white-space:nowrap;transform:scaleX(0.9641);transform-origin:0 0;">SimChart</div>
<svg class="a" style="left:987px;top:12px" width="11" height="9"><path d="M1.5 1.5l7 6M8.5 1.5l-7 6" stroke="#6a6e7a" stroke-width="2"/></svg><svg class="a" style="left:1023px;top:9px" width="55" height="12"><path d="M1 3.5h8l-4 4z" fill="#777b88"/><path d="M28 1.5v8l-5-4z" fill="#777b88"/><path d="M46 1v8l4-4z" fill="#c4c6cc"/></svg><svg class="a" style="left:261px;top:10px" width="14" height="14"><rect width="14" height="14" fill="#7d7d7d"/><rect x="1" y="1" width="2" height="2" fill="#fff"/><rect x="1" y="4" width="2" height="2" fill="#fff"/><rect x="1" y="8" width="2" height="2" fill="#fff"/><rect x="1" y="11" width="2" height="2" fill="#fff"/><rect x="4" y="1" width="2" height="2" fill="#fff"/><rect x="4" y="4" width="2" height="2" fill="#fff"/><rect x="4" y="8" width="2" height="2" fill="#fff"/><rect x="4" y="11" width="2" height="2" fill="#fff"/><rect x="8" y="1" width="2" height="2" fill="#fff"/><rect x="8" y="4" width="2" height="2" fill="#fff"/><rect x="8" y="8" width="2" height="2" fill="#fff"/><rect x="8" y="11" width="2" height="2" fill="#fff"/><rect x="11" y="1" width="2" height="2" fill="#fff"/><rect x="11" y="4" width="2" height="2" fill="#fff"/><rect x="11" y="8" width="2" height="2" fill="#fff"/><rect x="11" y="11" width="2" height="2" fill="#fff"/><rect x="1" y="11" width="2" height="2" fill="#1f9be0"/><rect x="11" y="11" width="2" height="2" fill="#1f9be0"/><rect x="8" y="4" width="2" height="2" fill="#1f9be0"/><path d="M2.2 10.6L7.6 5.4H10.4L11.9 9L10.4 11.3H3.4Z M4.8 9.4L7.2 7.8" stroke="#e0621c" stroke-width="1.25" fill="none" stroke-linejoin="round"/></svg><svg class="a" style="left:351px;top:9px" width="17" height="17"><path d="M1.5 1.5H9.5L12.5 4.5V14.5H1.5Z" fill="#fff"/><path d="M6 14.5H1.5V1.5H9.5L12.5 4.5V9.5M9.5 1.5V4.5H12.5" stroke="#767676" stroke-width="1.2" fill="none"/><path d="M3 6.5h8M3 8.5h8M3 10.5h6" stroke="#1f8fd1" stroke-width="1.1"/><path d="M6.8 16L7.6 12.8L13 7.4L15.6 10L10.2 15.4Z" fill="#2c94d4"/><path d="M8.6 12l2.4 2.4M11.6 9l2.4 2.4" stroke="#d8ecf8" stroke-width="0.7"/></svg><svg class="a" style="left:500px;top:10px" width="16" height="15"><rect x="0" y="8" width="3" height="7" fill="#1f8fd1"/><rect x="4" y="6" width="3" height="9" fill="#fec94b"/><rect x="8" y="0" width="3" height="15" fill="#5b9089"/><rect x="12" y="3" width="3" height="12" fill="#d4621f"/></svg><svg class="a" style="left:614px;top:9px" width="14" height="15"><path d="M0 0H14V3H6.5L11 7.5L6.5 12H14V15H0L6.5 7.5Z" fill="#fe5e20"/></svg><svg class="a" style="left:815px;top:10px" width="16" height="15"><rect x="0" y="8" width="3" height="7" fill="#1f8fd1"/><rect x="4" y="6" width="3" height="9" fill="#fec94b"/><rect x="8" y="0" width="3" height="15" fill="#5b9089"/><rect x="12" y="3" width="3" height="12" fill="#d4621f"/></svg><svg class="a" style="left:914px;top:9px" width="16" height="15"><rect x="0" y="8" width="3" height="7" fill="#1f8fd1"/><rect x="4" y="6" width="3" height="9" fill="#fec94b"/><rect x="8" y="0" width="3" height="15" fill="#5b9089"/><rect x="12" y="3" width="3" height="12" fill="#d4621f"/></svg><div style="position:absolute;left:371px;top:107px;width:260px;height:320px;border:1px solid #878b97;background:linear-gradient(#dddee3,#d3d4da 22px,#cfd0d7 22px,#cfd0d7)"></div>
<div style="position:absolute;left:372px;top:108px;width:258px;height:1px;background:#f4f4f6"></div>
<div style="position:absolute;left:372px;top:108px;width:1px;height:21px;background:#eeeff2"></div>
<div style="position:absolute;left:378.6px;top:113px;font-size:11px;line-height:13px;color:#575c78;font-weight:bold;white-space:nowrap;transform:scaleX(1.0577);transform-origin:0 0;">Gruppierung (FLG_Duration)</div>
<div style="position:absolute;left:598px;top:112px;width:29px;height:14px;border:1px solid #a3a6b0;border-radius:3px;background:linear-gradient(#f0f1f3,#dcdde2)"></div>
<svg class="a" style="left:607px;top:114px" width="12" height="10"><path d="M2 1.5l7 6M9 1.5l-7 6" stroke="#73778a" stroke-width="2.1"/></svg><div style="position:absolute;left:375px;top:129px;width:252px;height:294px;border:1px solid #979aa6;background:#e9eaee;box-shadow:inset -1px -1px 0 #f7f7f9"></div>
<div style="position:absolute;left:387.6px;top:150px;font-size:11px;line-height:13px;color:#141440;font-weight:normal;white-space:nowrap;transform:scaleX(0.9713);transform-origin:0 0;">Gruppierung</div>
<div style="position:absolute;left:387.6px;top:180px;font-size:11px;line-height:13px;color:#141440;font-weight:normal;white-space:nowrap;transform:scaleX(1.0563);transform-origin:0 0;">Intervall</div>
<div style="position:absolute;left:405.8px;top:206px;font-size:11px;line-height:13px;color:#141440;font-weight:normal;white-space:nowrap;transform:scaleX(1.0085);transform-origin:0 0;">Min-Wert</div>
<div style="position:absolute;left:405.8px;top:230px;font-size:11px;line-height:13px;color:#141440;font-weight:normal;white-space:nowrap;transform:scaleX(1.0323);transform-origin:0 0;">Max-Wert</div>
<div style="position:absolute;left:387.6px;top:256px;font-size:11px;line-height:13px;color:#141440;font-weight:normal;white-space:nowrap;transform:scaleX(1.0497);transform-origin:0 0;">Intervall-Typ</div>
<div style="position:absolute;left:387.6px;top:280px;font-size:11px;line-height:13px;color:#141440;font-weight:normal;white-space:nowrap;transform:scaleX(0.9930);transform-origin:0 0;">Format</div>
<div style="position:absolute;left:389px;top:205px;width:13px;height:13px;border:1px solid #9a9da8;background:#fff;box-shadow:inset 0 0 0 1px #e9eaee,inset 0 0 0 2px #dfe1e6"></div>
<svg class="a" style="left:389px;top:203px" width="15" height="15"><path d="M1.6 8.4L5.4 13.6L12.8 1.4" stroke="#20203a" stroke-width="1.9" fill="none" stroke-linejoin="miter"/></svg><div style="position:absolute;left:389px;top:229px;width:13px;height:13px;border:1px solid #9a9da8;background:#fff;box-shadow:inset 0 0 0 1px #e9eaee,inset 0 0 0 2px #dfe1e6"></div>
<svg class="a" style="left:389px;top:227px" width="15" height="15"><path d="M1.6 8.4L5.4 13.6L12.8 1.4" stroke="#20203a" stroke-width="1.9" fill="none" stroke-linejoin="miter"/></svg><div style="position:absolute;left:477px;top:150px;width:137px;height:20px;background:#fff;border:1px solid #b4b7c0;border-top-color:#8d919c;border-left-color:#a3a6b0;border-bottom-color:#c7c9cf"></div>
<div style="position:absolute;left:480.8px;top:154px;font-size:11px;line-height:13px;color:#18206a;font-weight:normal;white-space:nowrap;transform:scaleX(0.9415);transform-origin:0 0;">Numerisch</div>
<svg class="a" style="left:602px;top:158px" width="8" height="5"><path d="M0.5 0.5h7l-3.5 4z" fill="#22264a"/></svg><div style="position:absolute;left:477px;top:176px;width:137px;height:20px;background:#fff;border:1px solid #b4b7c0;border-top-color:#8d919c;border-left-color:#a3a6b0;border-bottom-color:#c7c9cf"></div>
<div style="position:absolute;left:500px;top:179.8px;width:93.29999999999995px;text-align:right;font-size:11px;line-height:13px;color:#18206a;white-space:nowrap;letter-spacing:-0.108px">50,00</div><svg class="a" style="left:602px;top:179px" width="8" height="15"><path d="M0.5 5h7l-3.5-4z" fill="#22264a"/><path d="M0.5 10h7l-3.5 4z" fill="#22264a"/></svg><div style="position:absolute;left:477px;top:202px;width:137px;height:20px;background:#fff;border:1px solid #b4b7c0;border-top-color:#8d919c;border-left-color:#a3a6b0;border-bottom-color:#c7c9cf"></div>
<div style="position:absolute;left:500px;top:205.8px;width:93.29999999999995px;text-align:right;font-size:11px;line-height:13px;color:#18206a;white-space:nowrap;letter-spacing:-0.311px">100,00</div><svg class="a" style="left:602px;top:205px" width="8" height="15"><path d="M0.5 5h7l-3.5-4z" fill="#22264a"/><path d="M0.5 10h7l-3.5 4z" fill="#22264a"/></svg><div style="position:absolute;left:477px;top:226px;width:137px;height:20px;background:#fff;border:1px solid #b4b7c0;border-top-color:#8d919c;border-left-color:#a3a6b0;border-bottom-color:#c7c9cf"></div>
<div style="position:absolute;left:500px;top:229.8px;width:93.29999999999995px;text-align:right;font-size:11px;line-height:13px;color:#18206a;white-space:nowrap;letter-spacing:-0.231px">750,00</div><svg class="a" style="left:602px;top:229px" width="8" height="15"><path d="M0.5 5h7l-3.5-4z" fill="#22264a"/><path d="M0.5 10h7l-3.5 4z" fill="#22264a"/></svg><div style="position:absolute;left:477px;top:252px;width:137px;height:20px;background:#fff;border:1px solid #b4b7c0;border-top-color:#8d919c;border-left-color:#a3a6b0;border-bottom-color:#c7c9cf"></div>
<div style="position:absolute;left:480.8px;top:256px;font-size:11px;line-height:13px;color:#18206a;font-weight:normal;white-space:nowrap;transform:scaleX(1.0466);transform-origin:0 0;">[Start;Ende[</div>
<svg class="a" style="left:602px;top:260px" width="8" height="5"><path d="M0.5 0.5h7l-3.5 4z" fill="#22264a"/></svg><div style="position:absolute;left:477px;top:276px;width:137px;height:20px;background:#fff;border:1px solid #b4b7c0;border-top-color:#8d919c;border-left-color:#a3a6b0;border-bottom-color:#c7c9cf"></div>
<div style="position:absolute;left:480.8px;top:280px;font-size:11px;line-height:13px;color:#18206a;font-weight:normal;white-space:nowrap;transform:scaleX(1.2184);transform-origin:0 0;">0.##</div>
<svg class="a" style="left:602px;top:284px" width="8" height="5"><path d="M0.5 0.5h7l-3.5 4z" fill="#22264a"/></svg><div style="position:absolute;left:389px;top:313px;width:13px;height:13px;border:1px solid #9a9da8;background:#fff;box-shadow:inset 0 0 0 1px #e9eaee,inset 0 0 0 2px #dfe1e6"></div>
<svg class="a" style="left:389px;top:311px" width="15" height="15"><path d="M1.6 8.4L5.4 13.6L12.8 1.4" stroke="#20203a" stroke-width="1.9" fill="none" stroke-linejoin="miter"/></svg><div style="position:absolute;left:389px;top:337px;width:13px;height:13px;border:1px solid #9a9da8;background:#fff;box-shadow:inset 0 0 0 1px #e9eaee,inset 0 0 0 2px #dfe1e6"></div>
<svg class="a" style="left:389px;top:335px" width="15" height="15"><path d="M1.6 8.4L5.4 13.6L12.8 1.4" stroke="#20203a" stroke-width="1.9" fill="none" stroke-linejoin="miter"/></svg><div style="position:absolute;left:389px;top:360px;width:13px;height:13px;border:1px solid #9a9da8;background:#fff;box-shadow:inset 0 0 0 1px #e9eaee,inset 0 0 0 2px #dfe1e6"></div>
<svg class="a" style="left:389px;top:358px" width="15" height="15"><path d="M1.6 8.4L5.4 13.6L12.8 1.4" stroke="#20203a" stroke-width="1.9" fill="none" stroke-linejoin="miter"/></svg><div style="position:absolute;left:405.6px;top:313px;font-size:11px;line-height:13px;color:#141440;font-weight:normal;white-space:nowrap;transform:scaleX(0.9811);transform-origin:0 0;">Endwert anzeigen</div>
<div style="position:absolute;left:405.6px;top:336px;font-size:11px;line-height:13px;color:#141440;font-weight:normal;white-space:nowrap;transform:scaleX(1.0111);transform-origin:0 0;">Intervalle ergänzen</div>
<div style="position:absolute;left:405.6px;top:360px;font-size:11px;line-height:13px;color:#141440;font-weight:normal;white-space:nowrap;transform:scaleX(0.9744);transform-origin:0 0;">Vorschau</div>
<div style="position:absolute;left:464px;top:390px;width:73px;height:20px;border:1px solid #a4a7b1;border-radius:3px;background:linear-gradient(#eef2fb,#dbe4f8 50%,#d3def7 51%,#dfe7f9)"></div>
<div style="position:absolute;left:491.8px;top:394px;font-size:10.6px;line-height:12px;color:#141440;font-weight:normal;white-space:nowrap;">OK</div>
<div style="position:absolute;left:541px;top:390px;width:73px;height:20px;border:1px solid #a4a7b1;border-radius:3px;background:linear-gradient(#f6f6f7,#e9eaed 50%,#e1e2e6 51%,#e6e7ea)"></div>
<div style="position:absolute;left:551px;top:394px;font-size:11px;line-height:13px;color:#141440;font-weight:normal;white-space:nowrap;transform:scaleX(0.9752);transform-origin:0 0;">Abbrechen</div>
</body></html>
